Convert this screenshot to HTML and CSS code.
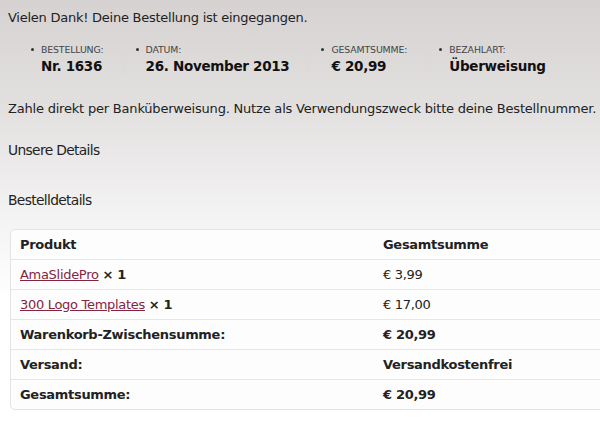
FILE: index.html
```html
<!DOCTYPE html>
<html lang="de">
<head>
  <meta charset="UTF-8" />
  <meta name="viewport" content="width=device-width, initial-scale=1.0"/>
  <title>Bestellung eingegangen</title>
  <link rel="stylesheet" href="styles.css">
</head>
<body>
  <p class="thanks">Vielen Dank! Deine Bestellung ist eingegangen.</p>

  <ul class="order-overview">
    <li><span class="label">Bestellung:</span><strong>Nr. 1636</strong></li>
    <li><span class="label">Datum:</span><strong>26. November 2013</strong></li>
    <li><span class="label">Gesamtsumme:</span><strong>&euro; 20,99</strong></li>
    <li><span class="label">Bezahlart:</span><strong>Überweisung</strong></li>
  </ul>

  <p class="note">Zahle direkt per Banküberweisung. Nutze als Verwendungszweck bitte deine Bestellnummer.</p>

  <h2>Unsere Details</h2>
  <h2>Bestelldetails</h2>

  <table class="shop-table">
    <thead>
      <tr>
        <th>Produkt</th>
        <th>Gesamtsumme</th>
      </tr>
    </thead>
    <tbody>
      <tr>
        <td><a href="#">AmaSlidePro</a> <strong>&times; 1</strong></td>
        <td>&euro; 3,99</td>
      </tr>
      <tr>
        <td><a href="#">300 Logo Templates</a> <strong>&times; 1</strong></td>
        <td>&euro; 17,00</td>
      </tr>
    </tbody>
    <tfoot>
      <tr>
        <th>Warenkorb-Zwischensumme:</th>
        <th>&euro; 20,99</th>
      </tr>
      <tr>
        <th>Versand:</th>
        <th>Versandkostenfrei</th>
      </tr>
      <tr>
        <th>Gesamtsumme:</th>
        <th>&euro; 20,99</th>
      </tr>
    </tfoot>
  </table>
</body>
</html>
```

FILE: styles.css
```css
body {
  margin: 0;
  padding: 0 0 0 8px;
  font-family: "DejaVu Sans", Verdana, sans-serif;
  font-size: 13px;
  letter-spacing: -0.3px;
  color: #222;
  background: linear-gradient(#d6d2d2 0, #e3e0e0 110px, #f3f2f2 210px, #fff 300px);
  min-height: 423px;
  overflow: hidden;
}

p { margin: 0; }

.thanks { padding-top: 10px; letter-spacing: -0.25px; }

.order-overview {
  display: flex;
  list-style: none;
  margin: 19px 0 0;
  padding: 0 0 0 23px;
}
.order-overview li {
  padding-right: 19px;
  margin-right: 12px;
  border-right: 1px dashed #dcd8d8;
}
.order-overview li:last-child { border-right: 0; }
.order-overview .label {
  display: block;
  font-size: 9.4px;
  letter-spacing: -0.15px;
  text-transform: uppercase;
  color: #444;
  position: relative;
  padding-left: 10px;
}
.order-overview .label::before {
  content: "";
  position: absolute;
  left: 0;
  top: 4px;
  width: 3px;
  height: 3px;
  border-radius: 50%;
  background: #333;
}
.order-overview strong {
  display: block;
  padding-left: 10px;
  font-size: 13.5px;
  line-height: 22px;
  color: #111;
}

.note { margin-top: 24px; letter-spacing: -0.2px; }

h2 {
  margin: 26px 0 0;
  font-size: 13.8px;
  letter-spacing: -0.65px;
  font-weight: normal;
}
h2 + h2 { margin-top: 34px; }

.shop-table {
  margin: 21px 0 0 2px;
  width: 620px;
  border-collapse: separate;
  border-spacing: 0;
  border: 1px solid #e3e3e3;
  border-radius: 5px;
  background: #fdfdfd;
}
.shop-table th, .shop-table td {
  text-align: left;
  padding: 0 9px;
  height: 29px;
  border-top: 1px solid #e6e6e6;
}
.shop-table thead th { border-top: 0; }
.shop-table th { font-weight: bold; }
.shop-table th:first-child, .shop-table td:first-child { width: 345px; }
.shop-table a { color: #85243f; }
```
